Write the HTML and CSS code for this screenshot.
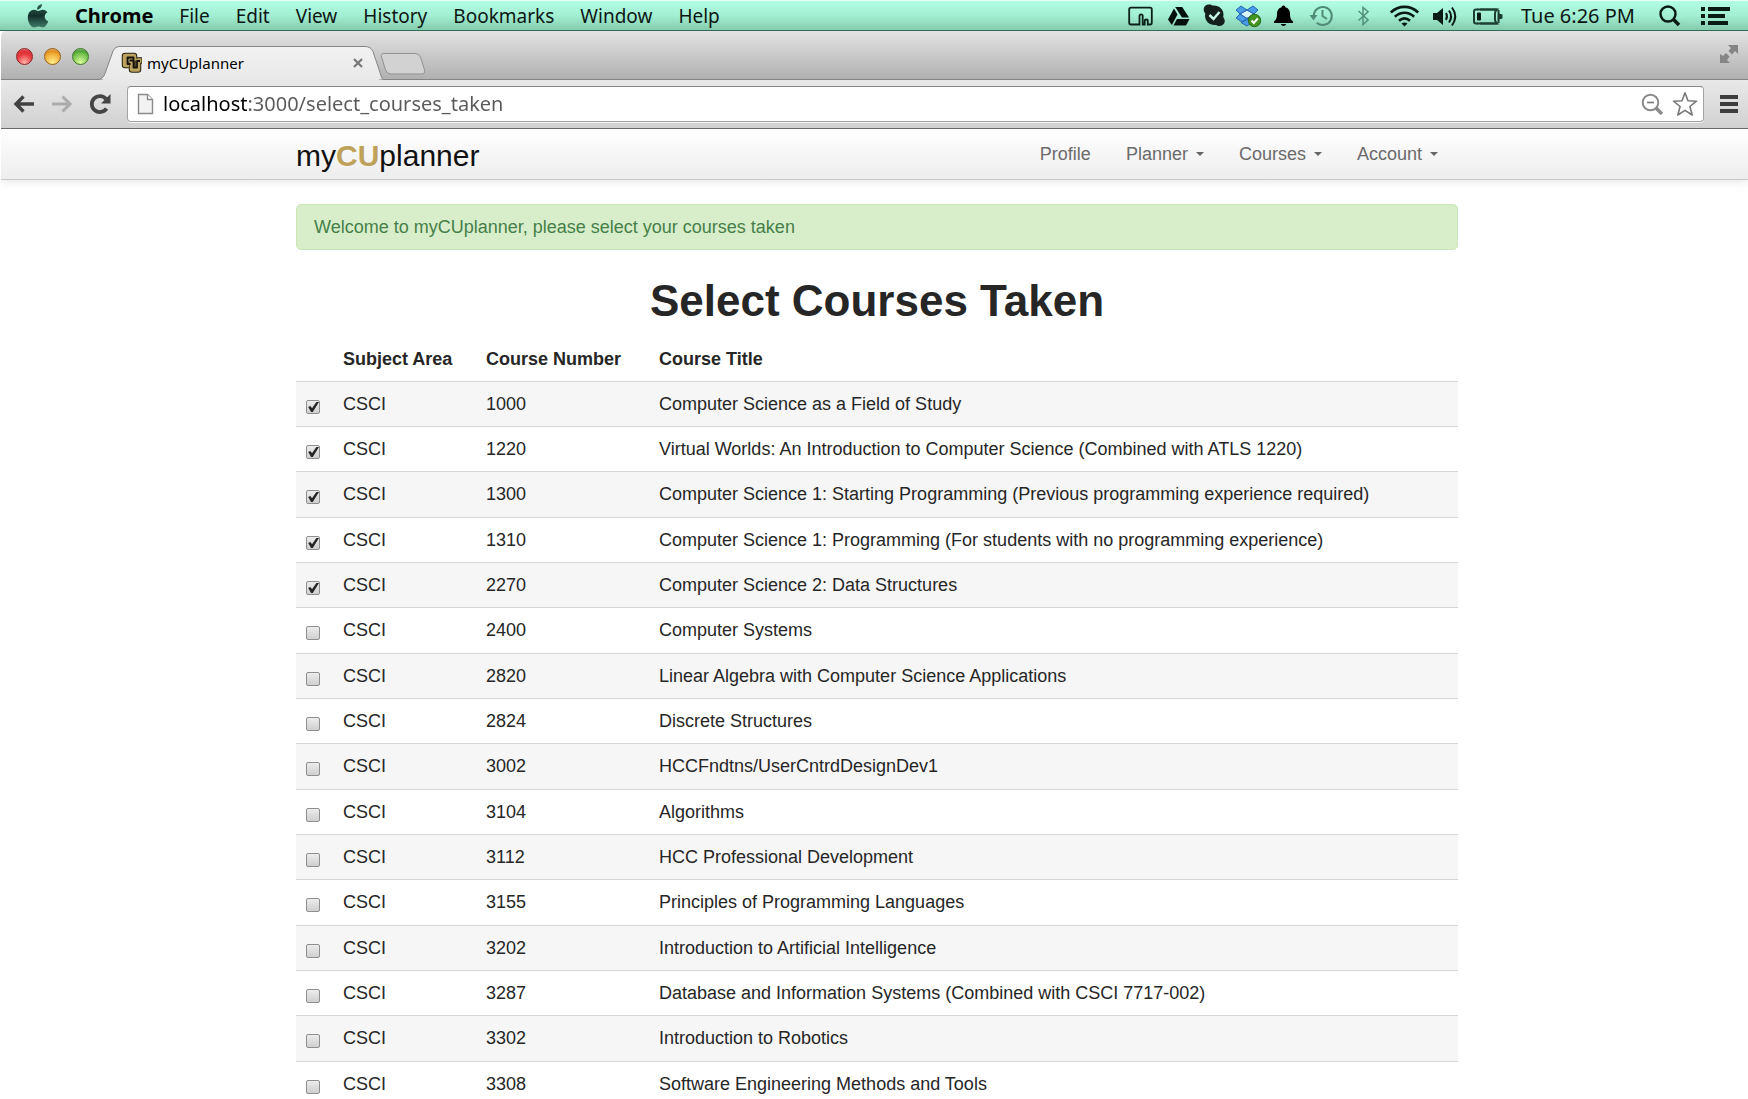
FILE: index.html
```html
<!DOCTYPE html>
<html lang="en">
<head>
<meta charset="utf-8">
<title>myCUplanner</title>
<link rel="stylesheet" href="styles.css">
</head>
<body>
<header class="menubar">
  <nav class="menus" aria-label="Application menus">
    <button class="apple" aria-label="Apple menu"><svg width="22" height="26" viewBox="0 0 22 26"><defs><linearGradient id="apple-fill" x1="0" y1="0" x2="0" y2="1"><stop offset="0" stop-color="#2f6353"/><stop offset=".5" stop-color="#14302a"/><stop offset="1" stop-color="#3f7a68"/></linearGradient></defs><path fill="url(#apple-fill)" d="M15 1c0 3-2 5.500-5 5.500C10 3.500 12 1.500 15 1zM11 8c1.300 0 2.500-1.300 4.800-1.300 2 0 3.600 1 4.600 2.600-4 2.300-3.400 7.500.8 9-1 3-3.200 6.200-5.400 6.200-1.700 0-2.200-1-4.300-1s-2.700 1-4.300 1C3.800 24.500.8 19 .8 14.400.8 9.600 3.900 6.800 6.800 6.800 8.800 6.800 10 8 11 8z"/></svg></button>
    <button class="app">Chrome</button>
    <button>File</button>
    <button>Edit</button>
    <button>View</button>
    <button>History</button>
    <button>Bookmarks</button>
    <button>Window</button>
    <button>Help</button>
  </nav>
  <div class="status">
    <button aria-label="Screen sharing"><svg width="38" height="30" viewBox="0 0 38 30"><path d="M14.500 23.500H8q-1.800 0-1.800-1.800V8.500Q6.200 6.700 8 6.700h19q1.800 0 1.800 1.800v13.200q0 1.800-1.800 1.800h-2.200V20q0-1.500-1.700-1.500-1.400 0-1.400 1.500v3.500h-2V15q0-1.600-1.600-1.600T16.500 15v8.500z" fill="none" stroke="#0d1f19" stroke-width="1.800"/></svg></button>
    <button aria-label="Drive"><svg width="36" height="30" viewBox="0 0 36 30"><g fill="#06110d"><path d="M14.200 6h7l6.800 10.500h-7z"/><path d="M13 7.500l3.500 6L10.800 24 7 18.500z"/><path d="M16 18h12.500L25 24.500H12.500z"/></g></svg></button>
    <button aria-label="Skype"><svg width="34" height="30" viewBox="0 0 34 30"><path fill="#15201d" d="M11 3.500c2-.3 3.500.2 4.500 1 6-.8 11 3.500 11 9l-.3 2.500c3.500 4.500.5 9-3.700 9-1.700 0-2.800-.5-3.500-1-6 .8-10.800-3.300-11-9.200l.3-2.300C5.500 9 6.500 4.500 11 3.500z"/><path d="M12.500 14l4 4L22.500 11" fill="none" stroke="#c6f7e4" stroke-width="2.500"/></svg></button>
    <button aria-label="Dropbox"><svg width="36" height="30" viewBox="0 0 36 30"><path fill="#d9f4ff" stroke="#2d79c9" d="M16 9l7 4-7 4.500L9 13z"/><g fill="#4a9be8" stroke="#2364ad"><path d="M10 5l6 4-7 4-4-4zM22 5l-6 4 7 4 4-4zM9 13l7 4.500L11 21l-6-4zM23 13l4 4-5 4-6-3.500z"/><path d="M10 21.500l6-3 5 3-5 3.500z"/></g><circle cx="23.500" cy="19.500" r="6.200" fill="#429522" stroke="#286912"/><path d="M20.500 19.500l2.300 2.500 4-4.500" fill="none" stroke="#fff" stroke-width="2"/></svg></button>
    <button aria-label="Notifications"><svg width="34" height="30" viewBox="0 0 34 30"><path fill="#000" d="M16.500 4.500c1.200 0 1.800.8 1.800 1.800 3 .8 4.700 3 4.700 6.200 0 4 .5 6 3 8V22H7v-1.500c2.500-2 3-4 3-8 0-3.200 1.700-5.400 4.700-6.200 0-1 .6-1.800 1.800-1.800zM13.800 23h5.400q-.7 2-2.700 2t-2.700-2z"/></svg></button>
    <button aria-label="Time Machine"><svg width="44" height="30" viewBox="0 0 44 30"><g fill="none" stroke="#4f8c77" stroke-width="2"><path d="M12.800 15a9 9 0 1 1 3 6.700M21.500 9v6l4.500 3"/></g><path fill="#4f8c77" d="M8.500 14h8l-4 5.500z"/></svg></button>
    <button aria-label="Bluetooth"><svg width="36" height="30" viewBox="0 0 36 30"><path d="M13.500 10l9.500 9-5 4.500v-17l5 4.300-9.500 8.700" fill="none" stroke="#53907b" stroke-width="1.500"/></svg></button>
    <button aria-label="Wi-Fi"><svg width="46" height="30" viewBox="0 0 46 30"><g fill="none" stroke="#0a1a15" stroke-width="2.600"><path d="M9.800 11.500c8-7.500 19.400-7.500 27.400 0M13.800 15.700c6-5.300 13.400-5.300 19.400 0M18 19.800c3.500-3 7.500-3 11 0"/></g><path fill="#0a1a15" d="M20.500 22.500q3-2 6 0l-3 3z"/></svg></button>
    <button aria-label="Volume"><svg width="38" height="30" viewBox="0 0 38 30"><path fill="#0a1a15" d="M6 12h4l6-5v17l-6-5H6z"/><path d="M19 12q2 3.300 0 7M22 9.500q4.200 6 0 12M25 6.500q6.500 9 0 18" fill="none" stroke="#0a1a15" stroke-width="2"/></svg></button>
    <button aria-label="Battery"><svg width="46" height="30" viewBox="0 0 46 30"><path d="M13 8.500h-2q-2 0-2 2v10q0 2 2 2h2M15 8.500h17q-2 2-2 3.500v7q0 1.500 2 3.500H15" fill="none" stroke="#1c3e33" stroke-width="2"/><path d="M12 8.500h20M12 22.500h20M33.500 9v13" fill="none" stroke="#1c3e33" stroke-width="2"/><rect x="12" y="11.500" width="4" height="8" rx="1" fill="#0a1a15"/><path fill="#1c3e33" d="M34 12.500l3.500 1v4l-3.500 1z"/></svg></button>
    <time class="clock">Tue 6:26 PM</time>
    <button class="spotlight" aria-label="Spotlight"><svg width="40" height="30" viewBox="0 0 40 30"><circle cx="14" cy="13" r="7.500" fill="none" stroke="#0a1a15" stroke-width="2.400"/><path d="M19 18l6 6" stroke="#0a1a15" stroke-width="3.500"/></svg></button>
    <button aria-label="Notification Center"><svg width="46" height="30" viewBox="0 0 46 30"><path d="M7 8h4M7 15h4M7 22h4M14 8h22M14 15h17M14 22h20" stroke="#0a1a15" stroke-width="4"/></svg></button>
  </div>
</header>

<div class="window">
  <div class="tabstrip">
    <div class="lights">
      <button class="light red" aria-label="Close window"></button>
      <button class="light amber" aria-label="Minimize window"></button>
      <button class="light green" aria-label="Zoom window"></button>
    </div>
    <div class="tab">
      <svg class="tab-shape" width="286" height="34" viewBox="0 0 286 34"><defs><linearGradient id="tab-fill" x1="0" y1="0" x2="0" y2="1"><stop offset="0" stop-color="#f1f1f1"/><stop offset="1" stop-color="#e9e9e9"/></linearGradient></defs><path d="M0 33.500q6 0 8-6L16 5q2-4.500 6-4.500h246q6 0 8 5l7 21q2 7 3 7" fill="url(#tab-fill)" stroke="#858585"/><path d="M6 33.500h276" stroke="#e9e9e9"/></svg>
      <svg width="22" height="23" viewBox="0 0 22 23"><g fill="none" stroke-linejoin="round"><path d="M13 8.500V4H4v9h4" stroke="#2a2412" stroke-width="6.500"/><path d="M8 8.500h3V17.500h6V8.500h4" stroke="#2a2412" stroke-width="6.500"/><path d="M13 8.500V4H4v9h4M8 8.500h3V17.500h6V8.500h3.500" stroke="#bba25f" stroke-width="4.500"/><path d="M12.500 8V5.500H6.500v6.500h3M8.500 8.500h4v7h3.500V9h3" stroke="#17140d" stroke-width="1.800"/></g></svg>
      <span class="tab-title">myCUplanner</span>
      <button class="tab-close" aria-label="Close tab"><svg width="10" height="10" viewBox="0 0 10 10"><path d="M1 1l8 8M9 1L1 9" stroke="#777" stroke-width="2.200"/></svg></button>
    </div>
    <button class="new-tab" aria-label="New tab"><svg width="46" height="24" viewBox="0 0 46 24"><path d="M4 1.500h31q4 0 5.500 3.500l4 13q1 4-3 4H11q-4 0-5.500-4L1.500 5q-1-3.500 2.500-3.500z" fill="#d2d2d2" stroke="#919191"/></svg></button>
    <button class="fullscreen" aria-label="Full screen"><svg width="20" height="20" viewBox="0 0 20 20"><g fill="#858585"><path d="M9 1h10v9l-3-3-3 3.500L9.500 7 12 4zM1 10l3 2 3-3 3.500 3.500L8 16l3 3H1z"/></g></svg></button>
  </div>
  <div class="toolbar">
    <div class="history">
      <button aria-label="Back"><svg width="22" height="20" viewBox="0 0 22 20"><path d="M21 10H3M10.500 2.500L3 10l7.500 7.500" fill="none" stroke="#424242" stroke-width="3.400"/></svg></button>
      <button aria-label="Forward"><svg width="22" height="20" viewBox="0 0 22 20"><path d="M1 10h18M11.500 2.500L19 10l-7.500 7.500" fill="none" stroke="#acacac" stroke-width="3"/></svg></button>
      <button aria-label="Reload"><svg width="22" height="22" viewBox="0 0 22 22"><path d="M17.500 15.500a8 8 0 1 1-.5-9.500" fill="none" stroke="#454545" stroke-width="3.800"/><path fill="#454545" d="M21.500 1v9.500H12z"/></svg></button>
    </div>
    <form class="omnibox">
      <svg width="17" height="22" viewBox="0 0 17 22"><path d="M1.500 1.500h9l5 5v14h-14z" fill="#f2f2f2" stroke="#8a8a8a" stroke-width="1.400"/><path d="M10.500 1.500v5h5" fill="#fff" stroke="#8a8a8a" stroke-width="1.400"/></svg>
      <input type="text" class="address" aria-label="Address" value="localhost:3000/select_courses_taken">
      <button type="button" aria-label="Page zoom"><svg width="22" height="22" viewBox="0 0 22 22"><circle cx="9.500" cy="9.500" r="7.800" fill="none" stroke="#8b8b8b" stroke-width="2"/><path d="M15 15l6 6" stroke="#8b8b8b" stroke-width="3.500"/><path d="M6 9.500h7" stroke="#777" stroke-width="1.600"/></svg></button>
      <button type="button" aria-label="Bookmark page"><svg width="26" height="26" viewBox="0 0 26 26"><path d="M13 1.800l3 8 8.500.4-6.600 5.300 2.300 8.500-7.200-4.700L5.800 24l2.300-8.500-6.600-5.300 8.500-.4z" fill="#fff" stroke="#787878" stroke-width="1.600" stroke-linejoin="round"/></svg></button>
    </form>
    <button class="main-menu" aria-label="Browser menu"><svg width="18" height="18" viewBox="0 0 18 18"><path d="M0 2h18M0 9h18M0 16h18" stroke="#3d3d3d" stroke-width="4"/></svg></button>
  </div>

  <div class="page">
    <header class="navbar">
      <div class="container navbar-inner">
        <a class="brand" href="#">my<strong>CU</strong>planner</a>
        <nav class="nav-links">
          <a href="#">Profile</a>
          <a href="#" class="dropdown">Planner</a>
          <a href="#" class="dropdown">Courses</a>
          <a href="#" class="dropdown">Account</a>
        </nav>
      </div>
    </header>
    <main>
      <div class="container">
      <p class="alert" role="status">Welcome to myCUplanner, please select your courses taken</p>
      <h1>Select Courses Taken</h1>
      <table class="courses">
        <colgroup><col class="col-check"><col class="col-subject"><col class="col-number"><col></colgroup>
        <thead><tr><td></td><th scope="col">Subject Area</th><th scope="col">Course Number</th><th scope="col">Course Title</th></tr></thead>
        <tbody>
          <tr><td><input type="checkbox" aria-labelledby="c1000" checked></td><td>CSCI</td><td>1000</td><td id="c1000">Computer Science as a Field of Study</td></tr>
          <tr><td><input type="checkbox" aria-labelledby="c1220" checked></td><td>CSCI</td><td>1220</td><td id="c1220">Virtual Worlds: An Introduction to Computer Science (Combined with ATLS 1220)</td></tr>
          <tr><td><input type="checkbox" aria-labelledby="c1300" checked></td><td>CSCI</td><td>1300</td><td id="c1300">Computer Science 1: Starting Programming (Previous programming experience required)</td></tr>
          <tr><td><input type="checkbox" aria-labelledby="c1310" checked></td><td>CSCI</td><td>1310</td><td id="c1310">Computer Science 1: Programming (For students with no programming experience)</td></tr>
          <tr><td><input type="checkbox" aria-labelledby="c2270" checked></td><td>CSCI</td><td>2270</td><td id="c2270">Computer Science 2: Data Structures</td></tr>
          <tr><td><input type="checkbox" aria-labelledby="c2400"></td><td>CSCI</td><td>2400</td><td id="c2400">Computer Systems</td></tr>
          <tr><td><input type="checkbox" aria-labelledby="c2820"></td><td>CSCI</td><td>2820</td><td id="c2820">Linear Algebra with Computer Science Applications</td></tr>
          <tr><td><input type="checkbox" aria-labelledby="c2824"></td><td>CSCI</td><td>2824</td><td id="c2824">Discrete Structures</td></tr>
          <tr><td><input type="checkbox" aria-labelledby="c3002"></td><td>CSCI</td><td>3002</td><td id="c3002">HCCFndtns/UserCntrdDesignDev1</td></tr>
          <tr><td><input type="checkbox" aria-labelledby="c3104"></td><td>CSCI</td><td>3104</td><td id="c3104">Algorithms</td></tr>
          <tr><td><input type="checkbox" aria-labelledby="c3112"></td><td>CSCI</td><td>3112</td><td id="c3112">HCC Professional Development</td></tr>
          <tr><td><input type="checkbox" aria-labelledby="c3155"></td><td>CSCI</td><td>3155</td><td id="c3155">Principles of Programming Languages</td></tr>
          <tr><td><input type="checkbox" aria-labelledby="c3202"></td><td>CSCI</td><td>3202</td><td id="c3202">Introduction to Artificial Intelligence</td></tr>
          <tr><td><input type="checkbox" aria-labelledby="c3287"></td><td>CSCI</td><td>3287</td><td id="c3287">Database and Information Systems (Combined with CSCI 7717-002)</td></tr>
          <tr><td><input type="checkbox" aria-labelledby="c3302"></td><td>CSCI</td><td>3302</td><td id="c3302">Introduction to Robotics</td></tr>
          <tr><td><input type="checkbox" aria-labelledby="c3308"></td><td>CSCI</td><td>3308</td><td id="c3308">Software Engineering Methods and Tools</td></tr>
        </tbody>
      </table>
      </div>
    </main>
  </div>
</div>
</body>
</html>
```
FILE: styles.css
```css
*, *::before, *::after { box-sizing: border-box; }

body {
  margin: 0;
  height: 100vh;
  display: flex;
  flex-direction: column;
  overflow: hidden;
  background: #fff;
  font-family: "Liberation Sans", Arial, sans-serif;
  font-size: 18px;
  line-height: 24px;
  color: #262626;
}

button {
  margin: 0;
  padding: 0;
  border: 0;
  background: none;
  color: inherit;
  font: inherit;
}

svg { display: block; }

/* System menu bar */
.menubar {
  display: flex;
  justify-content: space-between;
  height: 31px;
  flex: none;
  border-top: 1px solid #e6fff7;
  border-bottom: 1px solid #2f6b56;
  background: linear-gradient(#b2fde5, #a2efd3 50%, #85cbad);
  font: 19px/28px "Noto Sans", "Open Sans", sans-serif;
  color: #0d1714;
}

.menus {
  display: flex;
  align-items: center;
  gap: 26px;
  padding-left: 27px;
}

.app, .clock { font-size: 20px; }
.app { font-weight: bold; color: #000; }

.status { display: flex; align-items: center; margin-right: 8px; }
.clock { padding-left: 10px; }
.spotlight { margin-left: 19px; }

/* Browser window */
.window {
  display: flex;
  flex-direction: column;
  flex: 1;
  min-height: 0;
  margin-left: 1px;
  background: #fff;
}

.tabstrip {
  display: flex;
  align-items: flex-end;
  flex: none;
  height: 49px;
  border-bottom: 1px solid #858585;
  border-radius: 5px 0 0 0;
  background: linear-gradient(#e3e3e3, #b0b0b0);
}

.lights {
  display: flex;
  gap: 11px;
  align-self: center;
  padding: 2px 8px 0 15px;
}

.light {
  width: 17px;
  height: 17px;
  border: 1px solid #6d4a44;
  border-radius: 50%;
}

.red { background: radial-gradient(circle at 50% 90%, #ffb2a8, #e8373c 55%, #d53237 75%, #f4b4b4); border-color: #8d2426; }
.amber { background: radial-gradient(circle at 50% 90%, #fff08a, #f1a833 60%, #dd8e24 75%, #f6d6a0); border-color: #96601c; }
.green { background: radial-gradient(circle at 50% 90%, #dbff9d, #6ebf49 60%, #4fa037 75%, #bfe0b0); border-color: #3f7728; }

.tab {
  position: relative;
  display: flex;
  align-items: center;
  width: 286px;
  height: 34px;
  margin-bottom: -1px;
  padding: 0 20px 0 24px;
  font: 15px/20px "Noto Sans", "Open Sans", sans-serif;
  color: #000;
}

.tab > * { position: relative; }
.tab > .tab-shape { position: absolute; left: 0; top: 0; }
.tab-title { flex: 1; padding-left: 4px; }

.new-tab { align-self: flex-end; margin: 0 auto 3px -3px; }
.fullscreen { align-self: center; margin: 0 9px 2px 0; }

.toolbar {
  display: flex;
  align-items: center;
  gap: 16px;
  flex: none;
  height: 49px;
  padding: 0 10px 0 12px;
  border-bottom: 1px solid #6b6b6b;
  background: linear-gradient(#e9e9e9, #d1d1d1);
}

.history { display: flex; align-items: center; gap: 16px; }

.omnibox {
  display: flex;
  align-items: center;
  gap: 9px;
  flex: 1;
  height: 36px;
  padding: 0 5px 0 9px;
  border: 1px solid #a3a3a3;
  border-top-color: #858585;
  border-radius: 4px;
  background: #fff;
  box-shadow: 0 1px 0 #f2f2f2;
}

/* The host name is black, the rest of the address grey. */
.address {
  flex: 1;
  min-width: 0;
  height: 32px;
  padding: 0;
  border: 0;
  outline: 0;
  background: linear-gradient(to right, #000 86px, #5a5a5a 86px);
  background-clip: text;
  -webkit-background-clip: text;
  -webkit-text-fill-color: transparent;
  font: 20px/32px "Noto Sans", "Open Sans", sans-serif;
  color: #333;
}

/* Web page */
.page { flex: 1; min-height: 0; overflow: hidden; }

.container {
  width: 1162px;
  max-width: 100%;
  margin: 0 auto;
}

.navbar, main { padding-left: 5px; }

.navbar {
  height: 51px;
  border-bottom: 1px solid #c9c9c9;
  background: linear-gradient(#fff, #ededed);
  box-shadow: 0 1px 10px rgba(0, 0, 0, .12);
}

.navbar-inner {
  display: flex;
  justify-content: space-between;
  align-items: center;
  height: 50px;
}

.brand {
  padding-top: 3px;
  font-size: 30px;
  line-height: 36px;
  color: #111;
  text-decoration: none;
}

.brand strong { color: #bfa25a; }

.nav-links { display: flex; gap: 35px; padding-right: 20px; }

.nav-links a {
  display: flex;
  align-items: center;
  gap: 8px;
  color: #6b6b6b;
  text-decoration: none;
}

.dropdown::after {
  content: "";
  border: 4px solid transparent;
  border-top-color: #666;
  border-bottom: 0;
}

.alert {
  margin: 24px 0 27px;
  padding: 10px 17px;
  border: 1px solid #cbe6b5;
  border-radius: 5px;
  background: #d8eecb;
  color: #467f48;
}

h1 {
  margin: 0 0 12px;
  font-size: 44px;
  line-height: 48px;
  text-align: center;
}

.courses {
  width: 100%;
  border-spacing: 0;
  table-layout: fixed;
}

.col-check { width: 37px; }
.col-subject { width: 143px; }
.col-number { width: 173px; }

.courses th, .courses td {
  padding: 10px;
  text-align: left;
  vertical-align: top;
}

.courses tbody td { border-top: 1px solid #d6d6d6; }
.courses tbody tr:nth-child(odd) { background: #f6f6f6; }
.courses tbody tr:nth-child(3n) td { padding-bottom: 11px; }

.courses input {
  display: block;
  appearance: none;
  width: 14px;
  height: 14px;
  margin: 8px 0 0;
  border: 1px solid #8f8f8f;
  border-radius: 2px;
  background: linear-gradient(#ececec, #cfcfcf);
}

.courses input:checked::after {
  content: "";
  display: block;
  width: 12px;
  height: 12px;
  background: #262626;
  clip-path: polygon(10% 50%, 28% 42%, 42% 60%, 78% 8%, 100% 8%, 48% 92%, 34% 92%);
}
```
